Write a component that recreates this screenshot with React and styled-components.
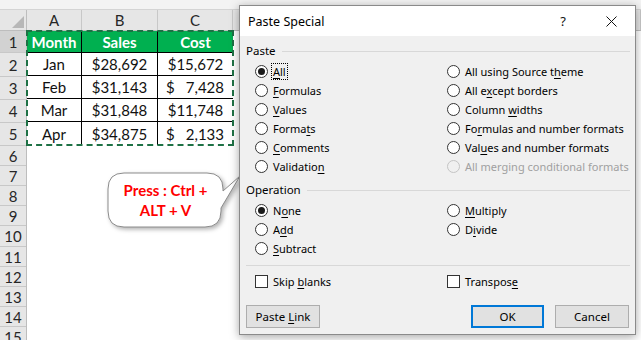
import React from "react";
import styled, { createGlobalStyle } from "styled-components";

const GlobalStyle = createGlobalStyle`
  html, body { margin: 0; padding: 0; background: #ffffff; }
  * { box-sizing: border-box; }
`;

const Page = styled.div`
  position: relative;
  width: 641px;
  height: 340px;
  overflow: hidden;
  background: #ffffff;
  font-family: Lato, "Liberation Sans", sans-serif;
`;

const TopStrip = styled.div`
  height: 10px;
  background: #f3f3f3;
  border-bottom: 1px solid #d4d4d4;
`;

const SheetBody = styled.div`
  display: flex;
`;

const RowHeaderCol = styled.div`
  display: flex;
  flex-direction: column;
  width: 27px;
  flex: none;
  background: #e6e6e6;
  border-right: 1px solid #bdbdbd;
`;

const Corner = styled.div`
  height: 21px;
  border-bottom: 1px solid #bdbdbd;
  display: flex;
  align-items: flex-end;
  justify-content: flex-end;
  padding: 0 2px 2px 0;
`;

const CornerTri = styled.div`
  width: 0;
  height: 0;
  border-left: 12px solid transparent;
  border-bottom: 12px solid #b7b7b7;
`;

const RowHead = styled.div`
  height: ${(p) => p.$h}px;
  display: flex;
  align-items: center;
  justify-content: center;
  font-size: 15px;
  color: #262626;
  border-bottom: 1px solid #c8c8c8;
  background: ${(p) => (p.$active ? "#d2d2d2" : "#e6e6e6")};
`;

const Main = styled.div`
  flex: 1;
  display: flex;
  flex-direction: column;
`;

const ColHeaderRow = styled.div`
  display: flex;
  height: 21px;
  background: #e6e6e6;
  border-bottom: 1px solid #bdbdbd;
`;

const ColHead = styled.div`
  width: ${(p) => p.$w}px;
  flex: ${(p) => (p.$w ? "none" : 1)};
  display: flex;
  align-items: center;
  justify-content: center;
  font-size: 15px;
  color: #262626;
  border-right: 1px solid #c8c8c8;
`;

const DataTable = styled.div`
  display: grid;
  grid-template-columns: 55px 76px 75px;
  grid-template-rows: 22px repeat(4, 23px);
  width: 206px;
  outline: 2px dashed #1e7145;
  outline-offset: -1px;
`;

const Cell = styled.div`
  display: flex;
  align-items: center;
  justify-content: ${(p) => (p.$split ? "space-between" : "center")};
  padding: ${(p) => (p.$split ? "0 9px 0 8px" : "0")};
  font-size: 15px;
  font-weight: ${(p) => (p.$head ? 700 : 400)};
  color: ${(p) => (p.$head ? "#ffffff" : "#111111")};
  background: ${(p) => (p.$head ? "#00b050" : "#ffffff")};
  border-right: ${(p) => (p.$lastCol ? "none" : "1px solid #000")};
  border-bottom: ${(p) => (p.$lastRow ? "none" : "1px solid #000")};
`;

/* ---------- callout ---------- */

const Callout = styled.div`
  position: absolute;
  left: 106px;
  top: 170px;
  width: 140px;
  height: 62px;
`;

const CalloutShape = styled.svg`
  position: absolute;
  left: 0;
  top: 0;
  filter: drop-shadow(2px 2px 2px rgba(0, 0, 0, 0.3));
`;

const CalloutText = styled.div`
  position: absolute;
  left: 2px;
  top: 10px;
  width: 115px;
  text-align: center;
  font-family: Lato, "Liberation Sans", sans-serif;
  font-weight: 700;
  font-size: 15px;
  line-height: 20px;
  color: #ff0000;
`;

/* ---------- dialog ---------- */

const Dialog = styled.div`
  position: absolute;
  left: 239px;
  top: 5px;
  width: 397px;
  height: 330px;
  display: flex;
  flex-direction: column;
  background: #f0f0f0;
  border: 1px solid #8a8a8a;
  box-shadow: 0 2px 9px rgba(0, 0, 0, 0.35);
  font-family: "Noto Sans", "Open Sans", sans-serif;
  font-size: 11px;
  color: #000;
`;

const TitleBar = styled.div`
  height: 30px;
  flex: none;
  display: flex;
  align-items: center;
  background: #ffffff;
  padding-left: 8px;
`;

const TitleText = styled.div`
  flex: 1;
  font-size: 12.5px;
`;

const TitleButton = styled.div`
  width: 48px;
  height: 30px;
  display: flex;
  align-items: center;
  justify-content: center;
  font-size: 13px;
  color: #111;
`;

const Body = styled.div`
  flex: 1;
  display: flex;
  flex-direction: column;
  padding: 7px 5px 0 6px;
`;

const GroupHead = styled.div`
  display: flex;
  align-items: center;
  gap: 6px;
  height: 16px;
  line-height: 16px;
  font-size: 11.5px;
  margin-top: ${(p) => p.$mt || 0}px;
  &::after {
    content: "";
    flex: 1;
    height: 1px;
    background: #d8d8d8;
  }
`;

const OptionGrid = styled.div`
  display: grid;
  grid-template-columns: 192px 1fr;
  grid-auto-rows: 19px;
  padding: ${(p) => p.$pad || "3px 0 0 9px"};
`;

const Option = styled.div`
  display: flex;
  align-items: center;
  gap: 4px;
  grid-column: ${(p) => p.$col};
  grid-row: ${(p) => p.$row};
  color: ${(p) => (p.$disabled ? "#a0a0a0" : "#000")};
  white-space: nowrap;
`;

const Radio = styled.span`
  width: 13px;
  height: 13px;
  flex: none;
  border-radius: 50%;
  border: 1px solid ${(p) => (p.$disabled ? "#c4c4c4" : "#333")};
  background: ${(p) => (p.$disabled ? "#f0f0f0" : "#fff")};
  display: flex;
  align-items: center;
  justify-content: center;
  &::after {
    content: "";
    width: 7px;
    height: 7px;
    border-radius: 50%;
    background: ${(p) => (p.$checked ? "#1a1a1a" : "transparent")};
  }
`;

const Check = styled.span`
  width: 13px;
  height: 13px;
  flex: none;
  border: 1px solid #333;
  background: #fff;
`;

const Label = styled.span`
  padding: 0 1px;
  line-height: 15px;
  white-space: pre;
  outline: ${(p) => (p.$focus ? "1px dotted #000" : "none")};
`;

const Key = styled.span`
  text-decoration: underline;
  text-underline-offset: 2px;
`;

const Divider = styled.div`
  height: 1px;
  background: #d8d8d8;
  margin: ${(p) => p.$m};
`;

const ButtonRow = styled.div`
  display: flex;
  align-items: center;
  margin-top: 14px;
`;

const Button = styled.div`
  width: ${(p) => p.$w}px;
  height: 23px;
  display: flex;
  align-items: center;
  justify-content: center;
  background: #e1e1e1;
  border: ${(p) => (p.$default ? "2px solid #0078d7" : "1px solid #adadad")};
  margin-left: ${(p) => p.$ml || 0}px;
  font-size: 11.5px;
`;

const ul = (text, i) => (
  <>
    {text.slice(0, i)}
    <Key>{text[i]}</Key>
    {text.slice(i + 1)}
  </>
);

const pasteOptions = [
  { text: "All", k: 0, col: 1, row: 1, checked: true, focus: true },
  { text: "Formulas", k: 0, col: 1, row: 2 },
  { text: "Values", k: 0, col: 1, row: 3 },
  { text: "Formats", k: 5, col: 1, row: 4 },
  { text: "Comments", k: 0, col: 1, row: 5 },
  { text: "Validation", k: 9, col: 1, row: 6 },
  { text: "All using Source theme", k: 18, col: 2, row: 1 },
  { text: "All except borders", k: 5, col: 2, row: 2 },
  { text: "Column widths", k: 7, col: 2, row: 3 },
  { text: "Formulas and number formats", k: 2, col: 2, row: 4 },
  { text: "Values and number formats", k: 3, col: 2, row: 5 },
  { text: "All merging conditional formats", k: -1, col: 2, row: 6, disabled: true },
];

const opOptions = [
  { text: "None", k: 1, col: 1, row: 1, checked: true },
  { text: "Add", k: 1, col: 1, row: 2 },
  { text: "Subtract", k: 0, col: 1, row: 3 },
  { text: "Multiply", k: 0, col: 2, row: 1 },
  { text: "Divide", k: 1, col: 2, row: 2 },
];

const rows = [
  ["Month", "Sales", "Cost"],
  ["Jan", "$28,692", ["$", "15,672"]],
  ["Feb", "$31,143", ["$", "7,428"]],
  ["Mar", "$31,848", ["$", "11,748"]],
  ["Apr", "$34,875", ["$", "2,133"]],
];

const rowHeights = [22, 24, 23, 23, 23, 20, 20, 20, 20, 21, 20, 20, 20, 20, 20];

function Sheet() {
  return (
    <>
      <TopStrip />
      <SheetBody>
        <RowHeaderCol>
          <Corner>
            <CornerTri />
          </Corner>
          {rowHeights.map((h, i) => (
            <RowHead key={i} $h={h} $active={i === 0}>
              {i + 1}
            </RowHead>
          ))}
        </RowHeaderCol>
        <Main>
          <ColHeaderRow>
            <ColHead $w={55}>A</ColHead>
            <ColHead $w={76}>B</ColHead>
            <ColHead $w={75}>C</ColHead>
            <ColHead>D</ColHead>
          </ColHeaderRow>
          <DataTable>
            {rows.map((r, ri) =>
              r.map((c, ci) => {
                const split = Array.isArray(c) && c[1].length < 6;
                return (
                  <Cell
                    key={`${ri}-${ci}`}
                    $head={ri === 0}
                    $split={split}
                    $lastCol={ci === 2}
                    $lastRow={ri === 4}
                  >
                    {Array.isArray(c) ? (
                      split ? (
                        <>
                          <span>{c[0]}</span>
                          <span>{c[1]}</span>
                        </>
                      ) : (
                        c[0] + c[1]
                      )
                    ) : (
                      c
                    )}
                  </Cell>
                );
              })
            )}
          </DataTable>
        </Main>
      </SheetBody>
    </>
  );
}

function Opt({ o }) {
  return (
    <Option $col={o.col} $row={o.row} $disabled={o.disabled}>
      <Radio $checked={o.checked} $disabled={o.disabled} />
      <Label $focus={o.focus}>{o.k >= 0 ? ul(o.text, o.k) : o.text}</Label>
    </Option>
  );
}

function PasteSpecial() {
  return (
    <Dialog>
      <TitleBar>
        <TitleText>Paste Special</TitleText>
        <TitleButton>?</TitleButton>
        <TitleButton>
          <svg width="11" height="11" viewBox="0 0 11 11">
            <path d="M0.5 0.5 L10.5 10.5 M10.5 0.5 L0.5 10.5" stroke="#111" strokeWidth="1" />
          </svg>
        </TitleButton>
      </TitleBar>
      <Body>
        <GroupHead>Paste</GroupHead>
        <OptionGrid>
          {pasteOptions.map((o) => (
            <Opt key={o.text} o={o} />
          ))}
        </OptionGrid>
        <GroupHead $mt={6}>Operation</GroupHead>
        <OptionGrid>
          {opOptions.map((o) => (
            <Opt key={o.text} o={o} />
          ))}
        </OptionGrid>
        <Divider $m="7px 0 6px 0" />
        <OptionGrid $pad="0 0 0 9px">
          <Option $col={1} $row={1}>
            <Check />
            <Label>Skip {ul("blanks", 0)}</Label>
          </Option>
          <Option $col={2} $row={1}>
            <Check />
            <Label>{ul("Transpose", 8)}</Label>
          </Option>
        </OptionGrid>
        <ButtonRow>
          <Button $w={74}>
            <Label>Paste {ul("Link", 0)}</Label>
          </Button>
          <Button $w={73} $ml={151} $default>
            OK
          </Button>
          <Button $w={74} $ml={11}>
            Cancel
          </Button>
        </ButtonRow>
      </Body>
    </Dialog>
  );
}

function Bubble() {
  return (
    <Callout>
      <CalloutShape width="140" height="62" viewBox="0 0 140 62">
        <path
          d="M18 3 H101 Q117 3 117 19 V21 L134 6 L115 38 V41 Q115 57 99 57 H18 Q2 57 2 41 V19 Q2 3 18 3 Z"
          fill="#ffffff"
          stroke="#8c8c8c"
          strokeWidth="1"
        />
      </CalloutShape>
      <CalloutText>
        Press : Ctrl +
        <br />
        ALT + V
      </CalloutText>
    </Callout>
  );
}

export default function App() {
  return (
    <Page>
      <GlobalStyle />
      <Sheet />
      <Bubble />
      <PasteSpecial />
    </Page>
  );
}
